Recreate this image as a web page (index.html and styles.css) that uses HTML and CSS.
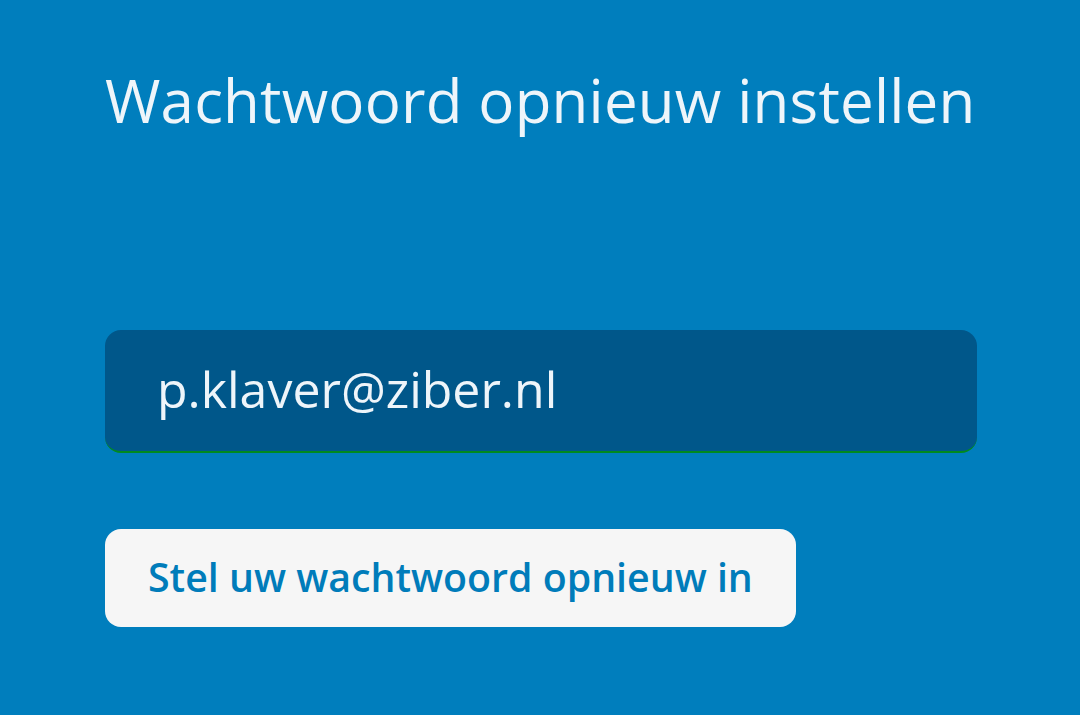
FILE: index.html
```html
<!DOCTYPE html>
<html lang="nl">
<head>
<meta charset="utf-8">
<title>Wachtwoord opnieuw instellen</title>
<link rel="stylesheet" href="styles.css">
</head>
<body>
<main class="reset">
  <h1 class="reset-title">Wachtwoord opnieuw instellen</h1>
  <form class="reset-form">
    <input class="reset-input" type="email" value="p.klaver@ziber.nl" aria-label="E-mailadres">
    <button class="reset-button" type="button">Stel uw wachtwoord opnieuw in</button>
  </form>
</main>
</body>
</html>
```

FILE: styles.css
```css
html, body {
  margin: 0;
  height: 100%;
}

body {
  background: #007ebd;
  font-family: "Open Sans", "Noto Sans", sans-serif;
  color: #eef5fa;
}

.reset {
  padding: 56px 103px 0 105px;
  display: flex;
  flex-direction: column;
}

.reset-title {
  margin: 0;
  font-size: 60px;
  font-weight: 400;
  line-height: 88px;
  letter-spacing: 0.2px;
}

.reset-form {
  margin-top: 186px;
  display: flex;
  flex-direction: column;
  align-items: flex-start;
  gap: 76px;
}

.reset-input {
  box-sizing: border-box;
  width: 100%;
  height: 123px;
  margin: 0;
  padding: 0 52px 4px;
  border: none;
  border-bottom: 2px solid #008a1f;
  border-radius: 16px;
  background: #00578a;
  color: #eef5fa;
  font-family: inherit;
  font-size: 50px;
  outline: none;
}

.reset-button {
  margin: 0;
  height: 98px;
  padding: 0 43px 2px;
  border: none;
  border-radius: 16px;
  background: #f6f6f6;
  color: #007cba;
  font-family: inherit;
  font-size: 39.3px;
  font-weight: 600;
  cursor: pointer;
}
```
